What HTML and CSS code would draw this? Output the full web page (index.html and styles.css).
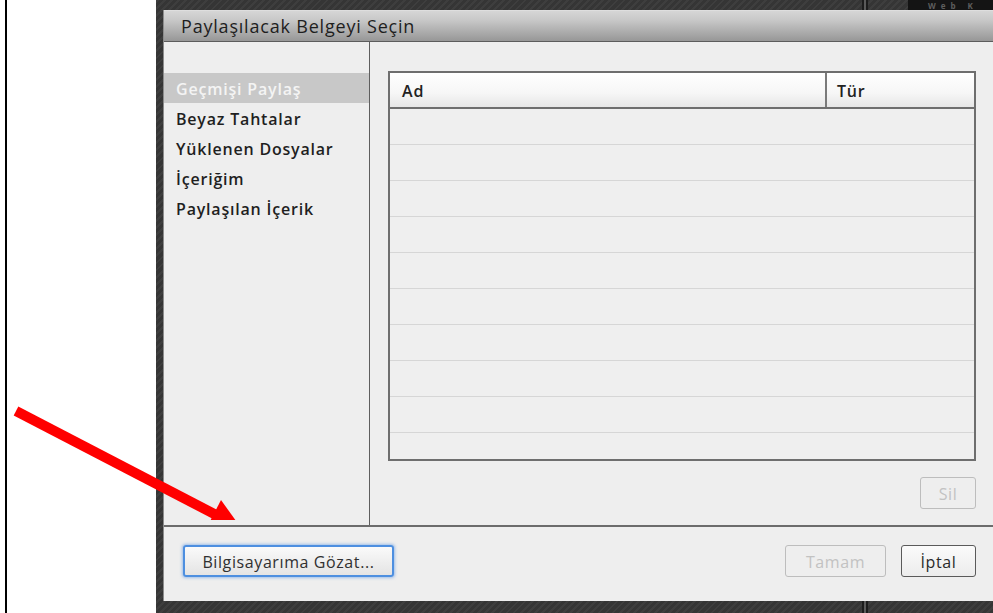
FILE: index.html
```html
<!DOCTYPE html>
<html lang="tr">
<head>
<meta charset="utf-8">
<title>Paylaşılacak Belgeyi Seçin</title>
<link rel="stylesheet" href="styles.css">
</head>
<body>
<div class="screen">
  <div class="page-margin"><div class="page-rule"></div></div>

  <div class="desk">
    <div class="desk-strip desk-top">
      <div class="pod-dark"><span class="pod-label">Web K</span></div>
    </div>

    <div class="dialog">
      <div class="titlebar">Paylaşılacak Belgeyi Seçin</div>

      <div class="dialog-body">
        <nav class="sources">
          <div class="source selected">Geçmişi Paylaş</div>
          <div class="source">Beyaz Tahtalar</div>
          <div class="source">Yüklenen Dosyalar</div>
          <div class="source">İçeriğim</div>
          <div class="source">Paylaşılan İçerik</div>
        </nav>

        <section class="files">
          <div class="grid">
            <div class="grid-head">
              <div class="col col-name">Ad</div>
              <div class="col col-type">Tür</div>
            </div>
            <div class="grid-rows">
              <div class="grid-row"></div>
              <div class="grid-row"></div>
              <div class="grid-row"></div>
              <div class="grid-row"></div>
              <div class="grid-row"></div>
              <div class="grid-row"></div>
              <div class="grid-row"></div>
              <div class="grid-row"></div>
              <div class="grid-row"></div>
            </div>
          </div>
          <div class="grid-actions">
            <button class="btn btn-small" disabled>Sil</button>
          </div>
        </section>
      </div>

      <div class="dialog-footer">
        <button class="btn btn-browse">Bilgisayarıma Gözat...</button>
        <div class="footer-right">
          <button class="btn btn-ok" disabled>Tamam</button>
          <button class="btn btn-cancel">İptal</button>
        </div>
      </div>
    </div>

    <div class="desk-strip desk-bottom"></div>
  </div>

  <!-- callout arrow pointing at the browse button -->
  <svg class="callout" width="260" height="140" viewBox="0 0 260 140">
    <line x1="16" y1="31" x2="222" y2="138" stroke="#ff0000" stroke-width="10"/>
    <polygon points="205,151 221,120 244,152" fill="#ff0000"/>
  </svg>
</div>
</body>
</html>
```

FILE: styles.css
```css
* {
  box-sizing: border-box;
}

html, body {
  margin: 0;
  padding: 0;
  width: 993px;
  height: 613px;
  overflow: hidden;
  background: #ffffff;
  font-family: "Open Sans", "DejaVu Sans", sans-serif;
}

.screen {
  position: relative;
  display: flex;
  width: 993px;
  height: 613px;
}

/* white document margin with its thin black rule */
.page-margin {
  width: 156px;
  flex: none;
  padding-left: 5px;
  background: #ffffff;
}

.page-rule {
  width: 2px;
  height: 100%;
  background: #000000;
}

/* dark striped application backdrop */
.desk {
  flex: 1;
  display: flex;
  flex-direction: column;
  padding-left: 7px;
  background:
    linear-gradient(90deg, transparent 706px, #1c1c1c 706px, #1c1c1c 708px, #5a5a5a 708px, #5a5a5a 710px, #1c1c1c 710px, #1c1c1c 712px, transparent 712px),
    repeating-linear-gradient(-45deg, #353535 0, #353535 3px, #3e3e3e 3px, #3e3e3e 5px);
}

.desk-strip {
  flex: none;
  margin-left: -7px;
  overflow: hidden;
}

.desk-top {
  height: 10px;
  display: flex;
  justify-content: flex-end;
}

.pod-dark {
  width: 85px;
  height: 10px;
  background: #141414;
  overflow: hidden;
}

.pod-label {
  display: block;
  margin: 1px 0 0 20px;
  color: #5e5e5e;
  font-size: 8px;
  font-weight: 700;
  letter-spacing: 5px;
  line-height: 9px;
}

.desk-bottom {
  height: 12px;
}

/* modal dialog */
.dialog {
  flex: 1;
  display: flex;
  flex-direction: column;
  background: #eeeeee;
  border-left: 1px solid #8c8c8c;
}

.titlebar {
  height: 32px;
  flex: none;
  padding-left: 17px;
  line-height: 30px;
  font-size: 18px;
  letter-spacing: 0.8px;
  color: #1e1e1e;
  background: linear-gradient(#d6d6d6, #c8c8c8 30%, #979797);
  border-top: 1px solid #dedede;
  border-bottom: 1px solid #5c5c5c;
}

.dialog-body {
  flex: none;
  display: flex;
  height: 483px;
}

.sources {
  width: 206px;
  flex: none;
  padding-top: 31px;
  border-right: 1px solid #5e5e5e;
}

.source {
  height: 30px;
  line-height: 32px;
  padding-left: 12px;
  font-size: 16px;
  letter-spacing: 0.8px;
  font-weight: 600;
  color: #1f1f1f;
}

.source.selected {
  background: #c8c8c8;
  color: #f4f4f4;
}

.files {
  flex: 1;
  display: flex;
  flex-direction: column;
  padding: 29px 17px 0 18px;
}

.grid {
  height: 390px;
  flex: none;
  border: 2px solid #6e6e6e;
  display: flex;
  flex-direction: column;
}

.grid-head {
  height: 36px;
  flex: none;
  display: flex;
  background: linear-gradient(#ffffff, #f6f6f6 60%, #e6e6e6);
  border-bottom: 2px solid #6e6e6e;
}

.col {
  line-height: 36px;
  font-size: 16px;
  letter-spacing: 0.8px;
  font-weight: 600;
  color: #222222;
  padding-left: 12px;
}

.col-name {
  width: 437px;
  border-right: 2px solid #7a7a7a;
}

.col-type {
  flex: 1;
  padding-left: 10px;
}

.grid-rows {
  flex: 1;
  background: #efefef;
}

.grid-row {
  height: 36px;
  border-bottom: 1px solid #d6d6d6;
}

.grid-actions {
  display: flex;
  justify-content: flex-end;
  padding: 16px 0;
}

/* buttons */
.btn {
  height: 32px;
  padding: 1px 0 0;
  font-family: inherit;
  font-size: 16px;
  letter-spacing: 0.6px;
  color: #2a2a2a;
  background: linear-gradient(#fbfbfb, #ececec);
  border: 1px solid #5a5a5a;
  border-radius: 3px;
}

.btn:disabled {
  color: #c2c2c2;
  border-color: #bdbdbd;
  background: #eeeeee;
}

.btn-small {
  width: 56px;
}

.dialog-footer {
  flex: 1;
  display: flex;
  justify-content: space-between;
  padding: 18px 17px 0 19px;
  border-top: 2px solid #6c6c6c;
}

.btn-browse {
  width: 211px;
  color: #303030;
  border: 2px solid #4d8fe0;
  box-shadow: 0 0 3px 1px rgba(90, 150, 230, 0.55);
  background: linear-gradient(#fafafa, #e4e4e4);
}

.footer-right {
  display: flex;
  gap: 15px;
}

.btn-ok {
  width: 101px;
}

.btn-cancel {
  width: 75px;
}

/* overlay arrow */
.callout {
  position: absolute;
  left: 0;
  top: 380px;
}
```
